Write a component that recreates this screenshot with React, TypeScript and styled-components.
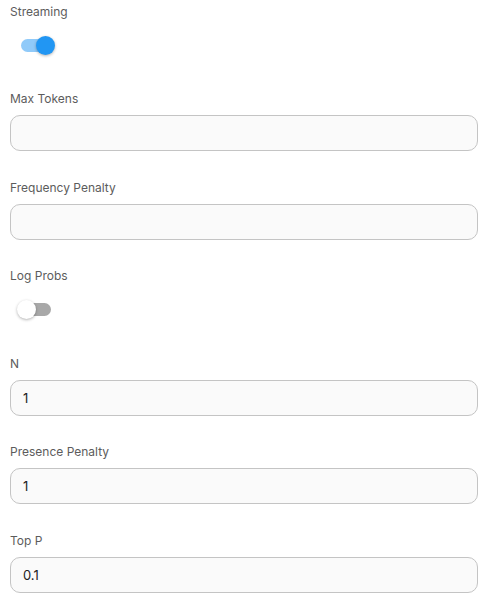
import React, { useState } from 'react';
import styled, { createGlobalStyle } from 'styled-components';

const GlobalStyle = createGlobalStyle`
  body {
    margin: 0;
    background: #ffffff;
    font-family: Inter, "Noto Sans", sans-serif;
  }
`;

const Form = styled.div`
  display: flex;
  flex-direction: column;
  padding: 1.5px 12px 0 10px;
`;

const Field = styled.div`
  display: flex;
  flex-direction: column;
  margin-bottom: 26.5px;
`;

const Label = styled.label`
  font-size: 12px;
  line-height: 20px;
  color: #5c5c5c;
  margin-bottom: 6px;
`;

const Input = styled.input`
  box-sizing: border-box;
  height: 36px;
  width: 100%;
  border: 1px solid #c4c4c4;
  border-radius: 10px;
  background: #fafafa;
  padding: 0 12px;
  font-family: inherit;
  font-size: 13px;
  color: #222222;
  outline: none;
`;

const SwitchRow = styled.div`
  height: 35px;
  display: flex;
  align-items: center;
`;

const Track = styled.button<{ $on: boolean }>`
  position: relative;
  width: 30px;
  height: 13px;
  margin-left: 11px;
  padding: 0;
  border: none;
  border-radius: 6.5px;
  cursor: pointer;
  background: ${({ $on }) => ($on ? '#90caf9' : '#a8a8a8')};
`;

const Thumb = styled.span<{ $on: boolean }>`
  position: absolute;
  top: -3px;
  left: ${({ $on }) => ($on ? '15px' : '-4px')};
  width: 19px;
  height: 19px;
  border-radius: 50%;
  background: ${({ $on }) => ($on ? '#2196f3' : '#ffffff')};
  box-shadow: 0 1px 3px rgba(0, 0, 0, 0.3);
`;

const Switch: React.FC<{ initial: boolean }> = ({ initial }) => {
  const [on, setOn] = useState(initial);
  return (
    <SwitchRow>
      <Track $on={on} onClick={() => setOn(!on)}>
        <Thumb $on={on} />
      </Track>
    </SwitchRow>
  );
};

const App: React.FC = () => {
  return (
    <>
      <GlobalStyle />
      <Form>
        <Field>
          <Label>Streaming</Label>
          <Switch initial={true} />
        </Field>
        <Field>
          <Label>Max Tokens</Label>
          <Input />
        </Field>
        <Field>
          <Label>Frequency Penalty</Label>
          <Input />
        </Field>
        <Field>
          <Label>Log Probs</Label>
          <Switch initial={false} />
        </Field>
        <Field>
          <Label>N</Label>
          <Input defaultValue="1" />
        </Field>
        <Field>
          <Label>Presence Penalty</Label>
          <Input defaultValue="1" />
        </Field>
        <Field>
          <Label>Top P</Label>
          <Input defaultValue="0.1" />
        </Field>
      </Form>
    </>
  );
};

export default App;
